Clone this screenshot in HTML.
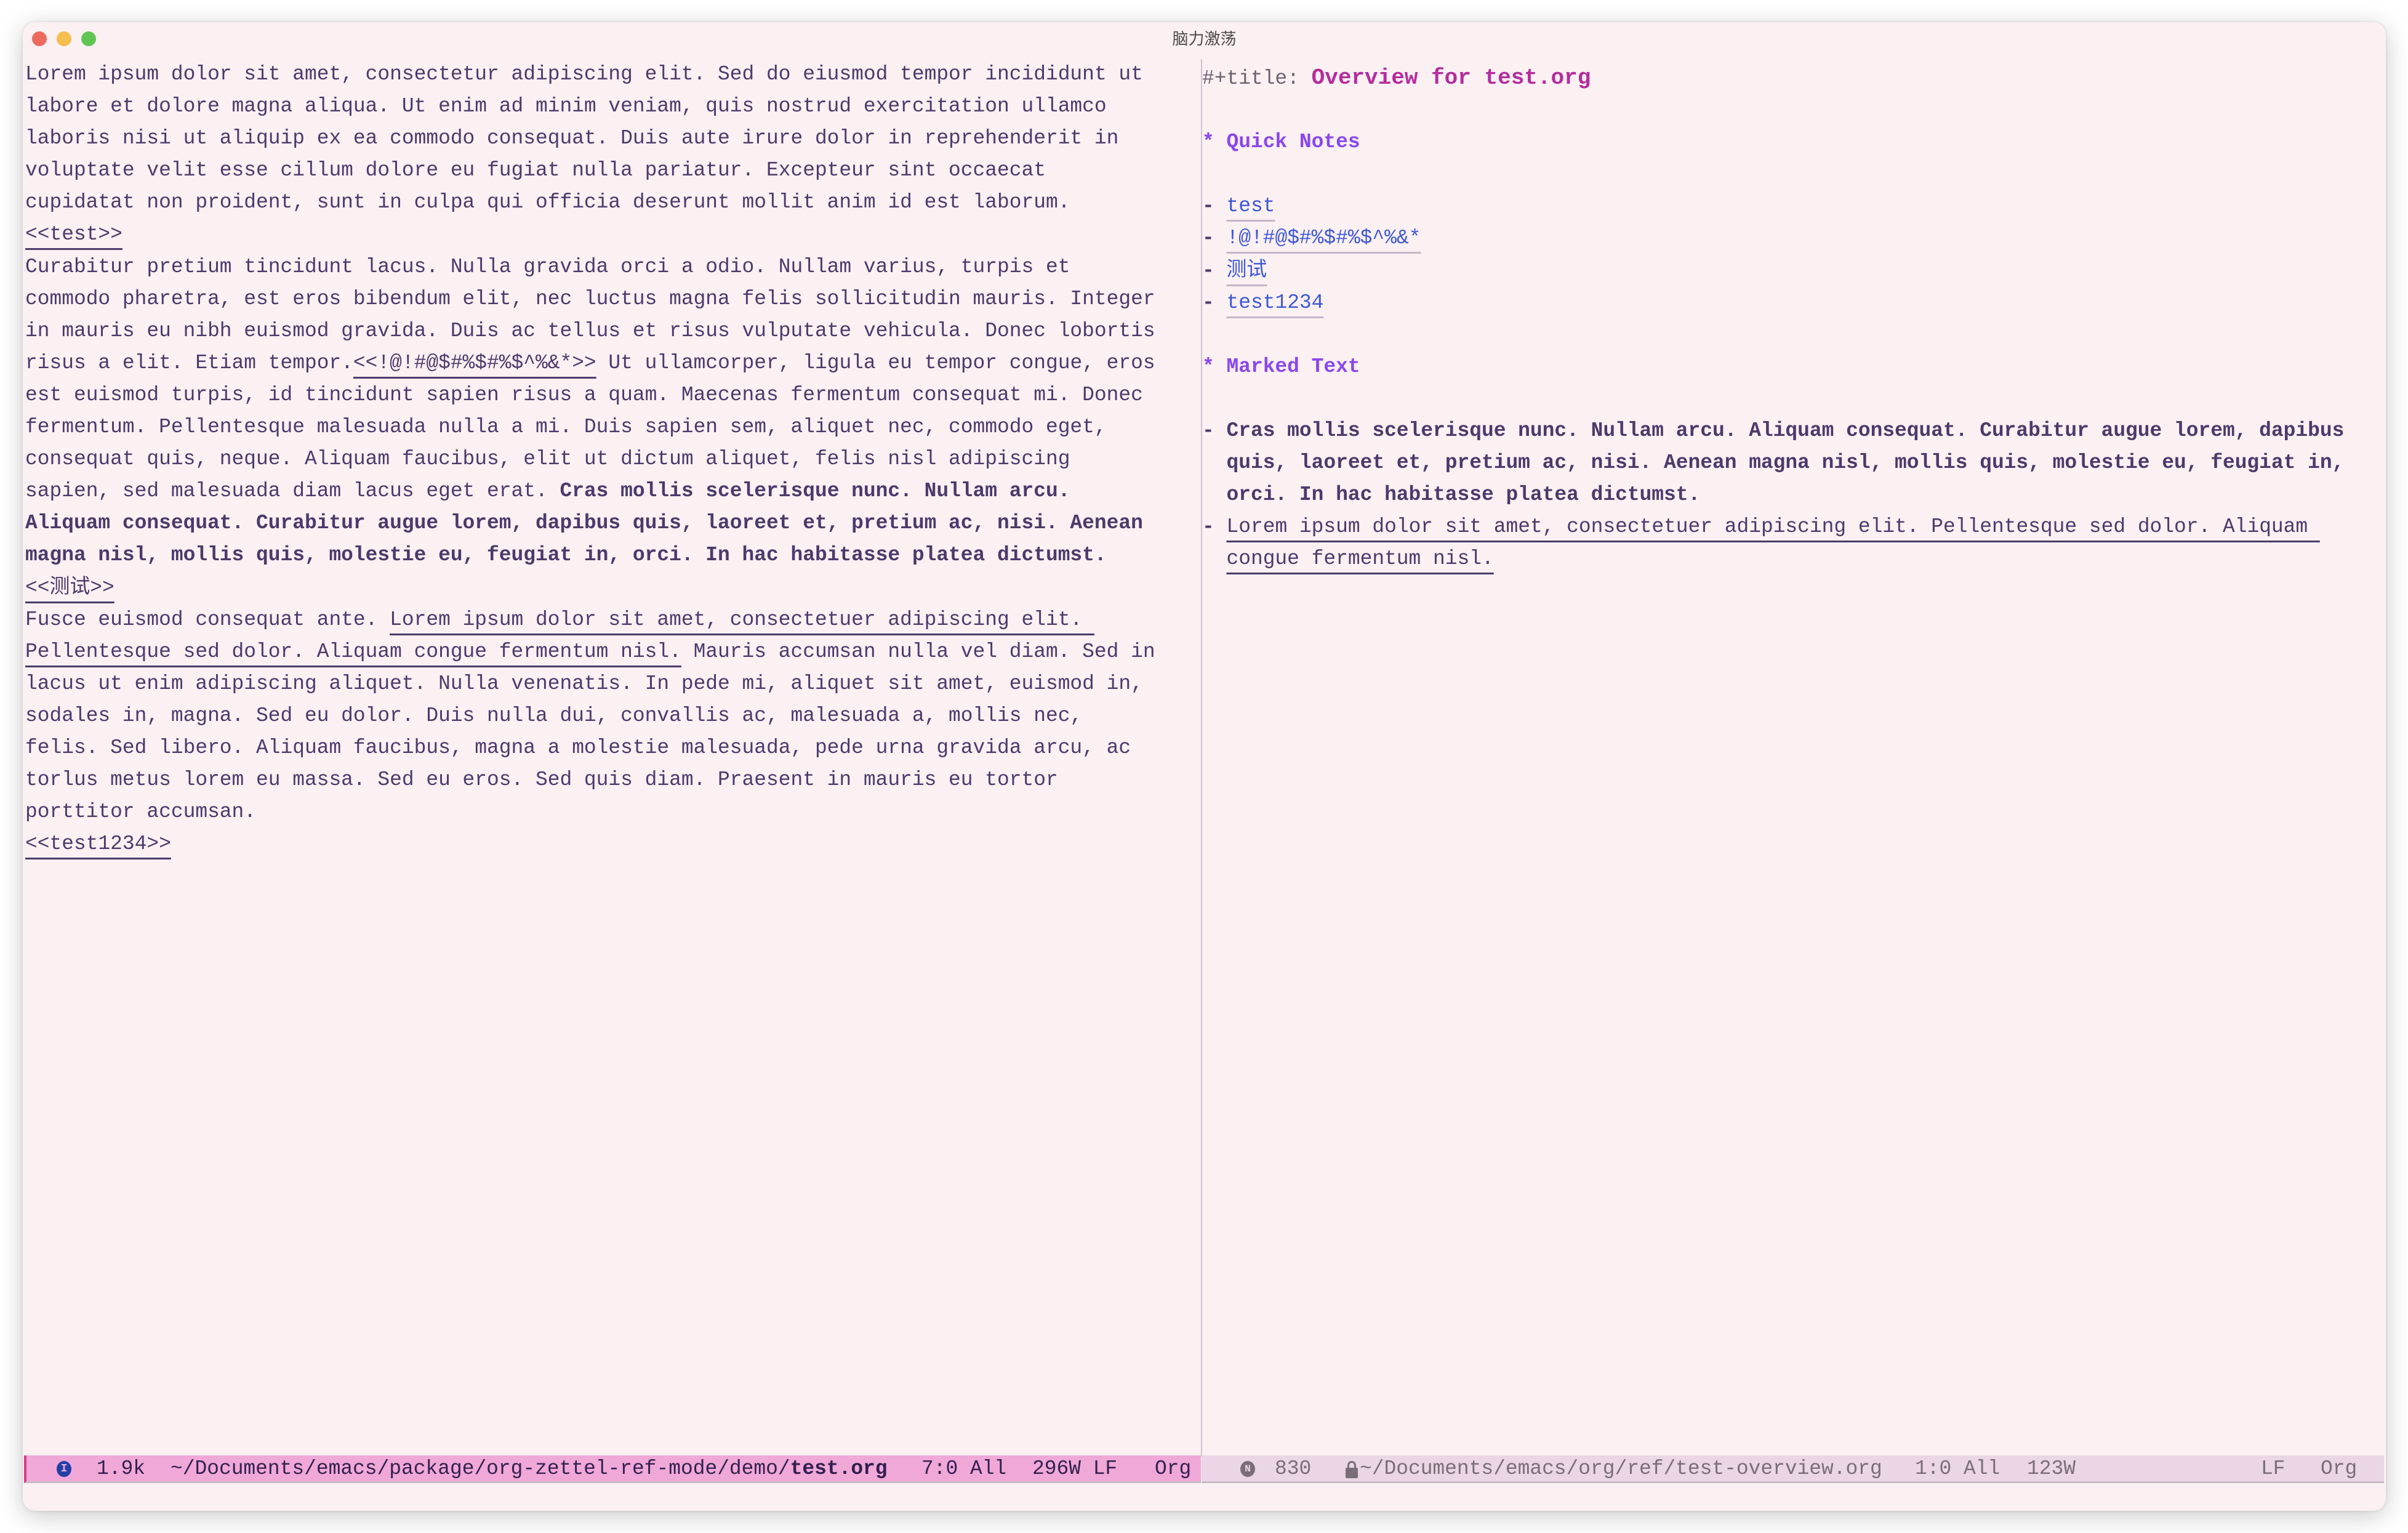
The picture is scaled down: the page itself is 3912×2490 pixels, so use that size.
<!DOCTYPE html>
<html><head><meta charset="utf-8"><style>
html,body{margin:0;padding:0;background:#fff;}
body{width:3912px;height:2490px;position:relative;overflow:hidden;font-family:"Liberation Mono","Noto Sans CJK SC",monospace;}
.win{position:absolute;left:37px;top:36px;width:3839px;height:2418px;background:#fbf0f2;border-radius:20px;box-shadow:0 8px 40px rgba(0,0,0,0.22),0 0 4px rgba(0,0,0,0.12);overflow:hidden;}
.dot{position:absolute;top:15px;width:24px;height:24px;border-radius:50%;}
.title{position:absolute;top:8px;left:0;width:100%;text-align:center;font:26px "Noto Sans CJK SC",sans-serif;color:#4b4b4b;line-height:36px;}
.pane{position:absolute;font-size:32.9px;line-height:52.1px;color:#4a3b6b;}
.pane div{height:52.1px;white-space:pre;overflow:visible;}
.u{text-decoration:underline;text-decoration-thickness:3px;text-underline-offset:14px;text-decoration-skip-ink:none;}
.ul{text-decoration-color:#c2b8c6;}
b{font-weight:bold;}
.lk{color:#3e58d5;}
.hd{color:#8a47ec;font-weight:bold;}
.divider{position:absolute;left:1914px;top:60px;width:2px;height:2270px;background:#cfc3cf;}
.sb{position:absolute;top:2328px;height:42px;border-bottom:3px solid #c8bcc8;font-size:32.9px;line-height:44px;}
.sb span{white-space:pre;}
</style></head><body>
<div class="win">
<div class="dot" style="left:15px;background:#ec6a5e"></div>
<div class="dot" style="left:55px;background:#f4bf4f"></div>
<div class="dot" style="left:95px;background:#61c554"></div>
<div class="title">脑力激荡</div>

<div class="pane" style="left:4px;top:59px;"><div>Lorem ipsum dolor sit amet, consectetur adipiscing elit. Sed do eiusmod tempor incididunt ut</div><div>labore et dolore magna aliqua. Ut enim ad minim veniam, quis nostrud exercitation ullamco</div><div>laboris nisi ut aliquip ex ea commodo consequat. Duis aute irure dolor in reprehenderit in</div><div>voluptate velit esse cillum dolore eu fugiat nulla pariatur. Excepteur sint occaecat</div><div>cupidatat non proident, sunt in culpa qui officia deserunt mollit anim id est laborum.</div><div><span class="u">&lt;&lt;test&gt;&gt;</span></div><div>Curabitur pretium tincidunt lacus. Nulla gravida orci a odio. Nullam varius, turpis et</div><div>commodo pharetra, est eros bibendum elit, nec luctus magna felis sollicitudin mauris. Integer</div><div>in mauris eu nibh euismod gravida. Duis ac tellus et risus vulputate vehicula. Donec lobortis</div><div>risus a elit. Etiam tempor.<span class="u">&lt;&lt;!@!#@$#%$#%$^%&amp;*&gt;&gt;</span> Ut ullamcorper, ligula eu tempor congue, eros</div><div>est euismod turpis, id tincidunt sapien risus a quam. Maecenas fermentum consequat mi. Donec</div><div>fermentum. Pellentesque malesuada nulla a mi. Duis sapien sem, aliquet nec, commodo eget,</div><div>consequat quis, neque. Aliquam faucibus, elit ut dictum aliquet, felis nisl adipiscing</div><div>sapien, sed malesuada diam lacus eget erat. <b>Cras mollis scelerisque nunc. Nullam arcu.</b></div><div><b>Aliquam consequat. Curabitur augue lorem, dapibus quis, laoreet et, pretium ac, nisi. Aenean</b></div><div><b>magna nisl, mollis quis, molestie eu, feugiat in, orci. In hac habitasse platea dictumst.</b></div><div><span class="u">&lt;&lt;测试&gt;&gt;</span></div><div>Fusce euismod consequat ante. <span class="u">Lorem ipsum dolor sit amet, consectetuer adipiscing elit. </span></div><div><span class="u">Pellentesque sed dolor. Aliquam congue fermentum nisl.</span> Mauris accumsan nulla vel diam. Sed in</div><div>lacus ut enim adipiscing aliquet. Nulla venenatis. In pede mi, aliquet sit amet, euismod in,</div><div>sodales in, magna. Sed eu dolor. Duis nulla dui, convallis ac, malesuada a, mollis nec,</div><div>felis. Sed libero. Aliquam faucibus, magna a molestie malesuada, pede urna gravida arcu, ac</div><div>torlus metus lorem eu massa. Sed eu eros. Sed quis diam. Praesent in mauris eu tortor</div><div>porttitor accumsan.</div><div><span class="u">&lt;&lt;test1234&gt;&gt;</span></div></div>

<div class="divider"></div>

<div class="pane" style="left:1916px;top:65px;"><div><span style="color:#6b6370">#+title: </span><span style="color:#b42d9e;font-weight:bold;font-size:36px">Overview for test.org</span></div><div></div><div class="hd">* Quick Notes</div><div></div><div><b>-</b> <span class="u ul lk">test</span></div><div><b>-</b> <span class="u ul lk">!@!#@$#%$#%$^%&amp;*</span></div><div><b>-</b> <span class="u ul lk">测试</span></div><div><b>-</b> <span class="u ul lk">test1234</span></div><div></div><div class="hd">* Marked Text</div><div></div><div><b>- Cras mollis scelerisque nunc. Nullam arcu. Aliquam consequat. Curabitur augue lorem, dapibus</b></div><div><b>  quis, laoreet et, pretium ac, nisi. Aenean magna nisl, mollis quis, molestie eu, feugiat in,</b></div><div><b>  orci. In hac habitasse platea dictumst.</b></div><div><b>-</b> <span class="u">Lorem ipsum dolor sit amet, consectetuer adipiscing elit. Pellentesque sed dolor. Aliquam </span></div><div>  <span class="u">congue fermentum nisl.</span></div></div>

<div class="sb" style="left:2px;width:1908px;background:#f0a8d8;color:#33204f;border-left:4px solid #d63d8c;"><span style="position:absolute;left:49px;top:9px;width:24px;height:26px;border-radius:50%;background:#2340a8;color:#f0a8d8;font-size:18px;line-height:26px;text-align:center;font-weight:bold">I</span><span style="position:absolute;left:114px">1.9k</span><span style="position:absolute;left:234px">~/Documents/emacs/package/org-zettel-ref-mode/demo/<b>test.org</b></span><span style="position:absolute;left:1454px">7:0 All</span><span style="position:absolute;left:1634px">296W LF</span><span style="position:absolute;left:1833px">Org</span></div>
<div class="sb" style="left:1915px;width:1921px;background:#ead6e4;color:#7a6e78;"><span style="position:absolute;left:63px;top:9px;width:24px;height:26px;border-radius:50%;background:#7a6e78;color:#ead6e4;font-size:16px;line-height:26px;text-align:center;font-weight:bold">N</span><span style="position:absolute;left:119px">830</span><span style="position:absolute;left:234px;top:20px;width:20px;height:17px;background:#7a6e78;border-radius:2px"></span><span style="position:absolute;left:237px;top:9px;width:8px;height:12px;border:3px solid #7a6e78;border-bottom:none;border-radius:8px 8px 0 0"></span><span style="position:absolute;left:257px">~/Documents/emacs/org/ref/test-overview.org</span><span style="position:absolute;left:1159px">1:0 All</span><span style="position:absolute;left:1341px">123W</span><span style="position:absolute;left:1721px">LF</span><span style="position:absolute;left:1818px">Org</span></div>
</div>
</body></html>
